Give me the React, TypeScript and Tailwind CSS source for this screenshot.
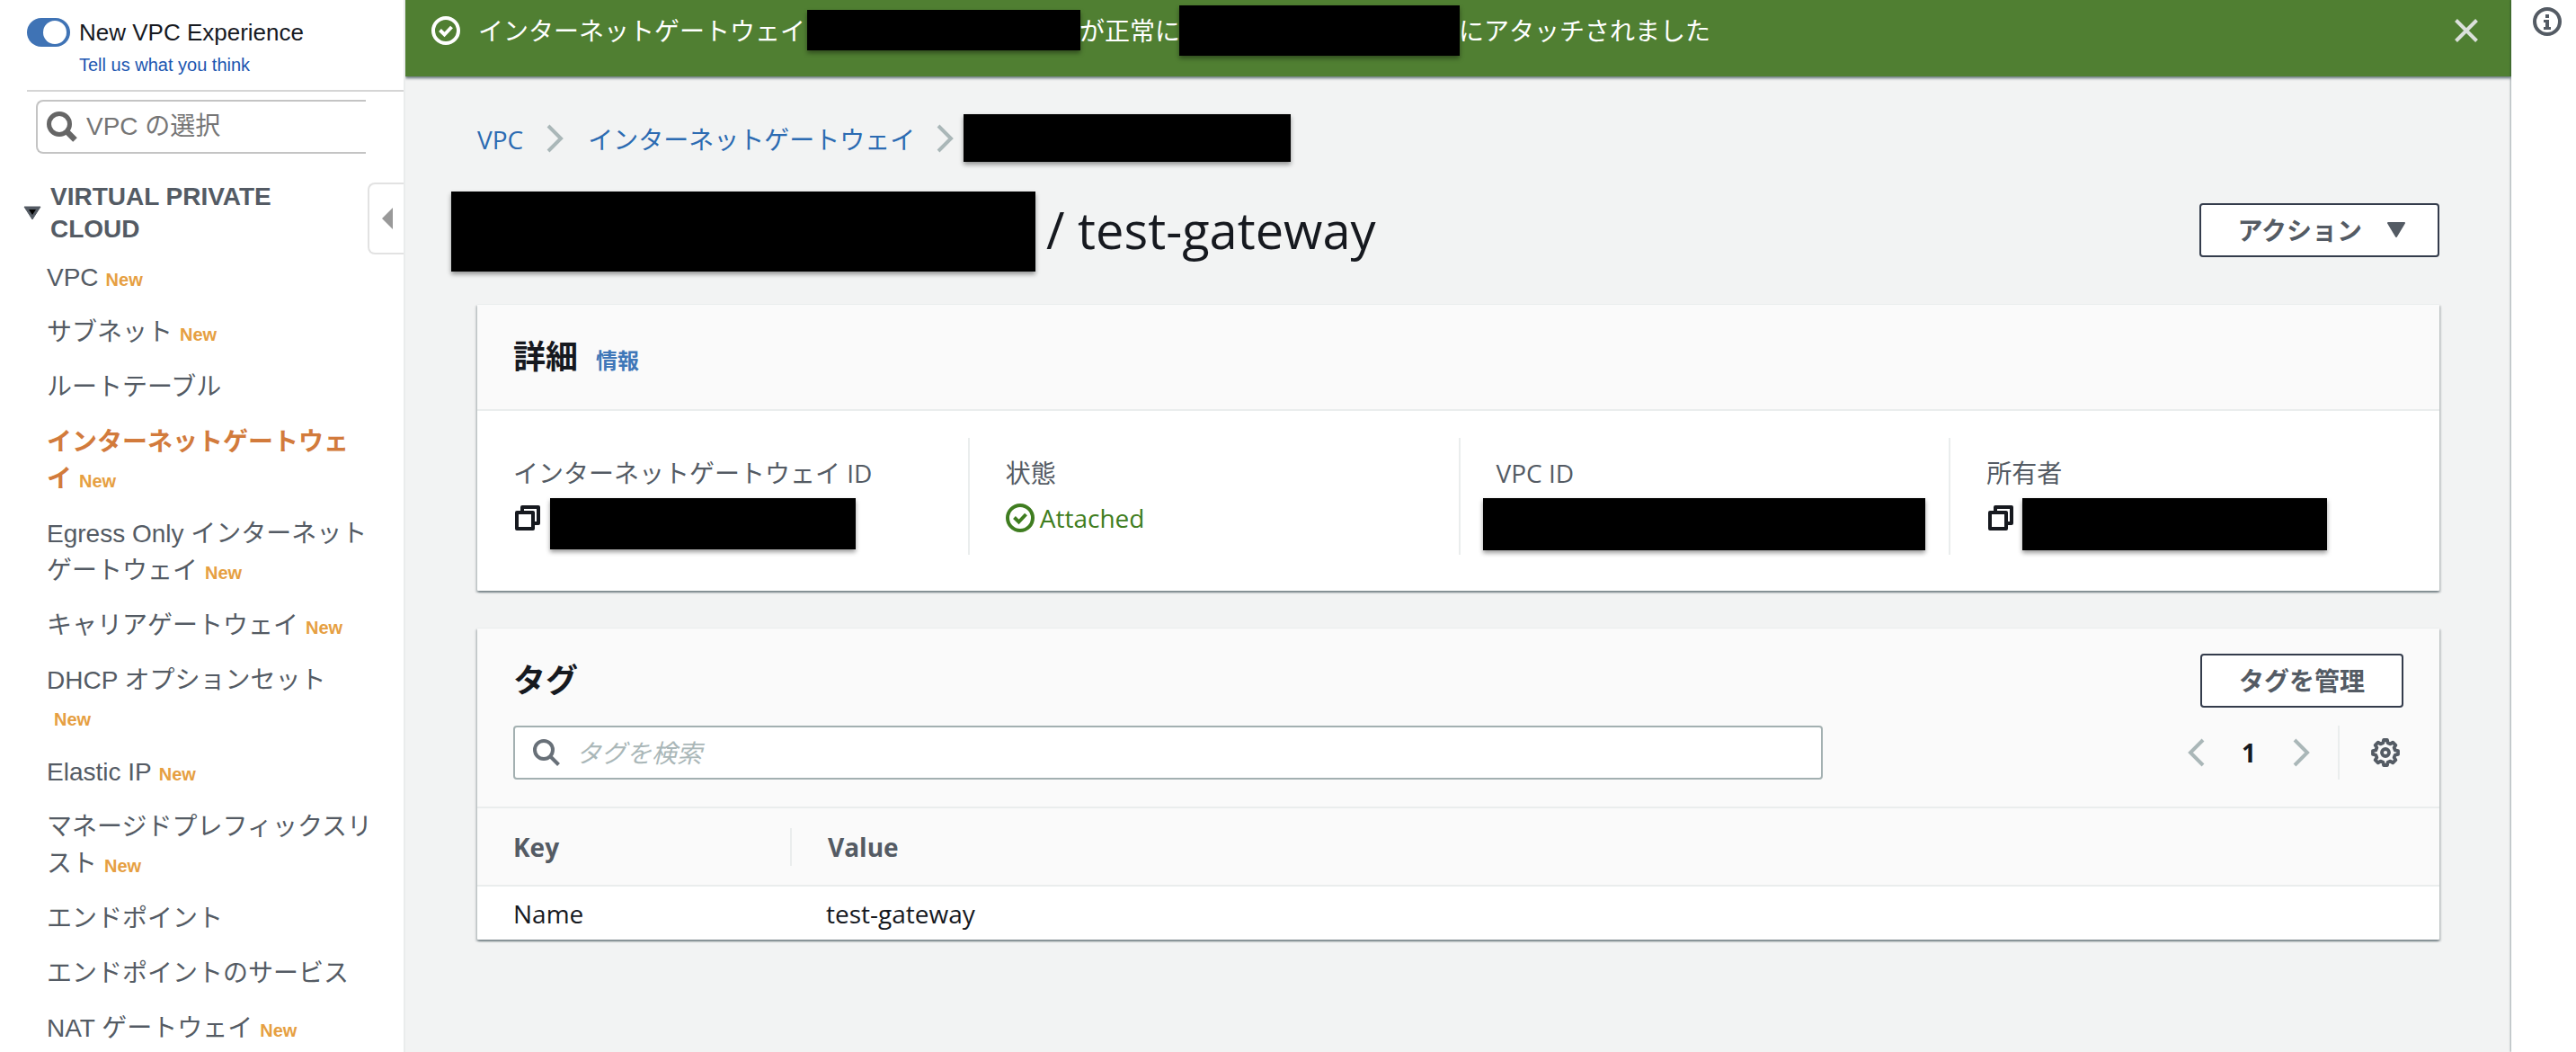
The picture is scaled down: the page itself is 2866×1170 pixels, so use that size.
import type { ReactNode } from "react";

type IconProps = { className?: string };

const CheckCircle = ({ className }: IconProps) => (
  <svg viewBox="0 0 32 32" fill="none" stroke="currentColor" className={className} aria-hidden="true">
    <circle cx="16" cy="16" r="14" strokeWidth="4" />
    <path d="M9.500 15.500l5 5 8-8.500" strokeWidth="4" />
  </svg>
);

const Chevron = ({ className }: IconProps) => (
  <svg viewBox="0 0 20 32" fill="none" stroke="currentColor" strokeWidth="4" className={className} aria-hidden="true">
    <path d="M2 2l14 14L2 30" />
  </svg>
);

const Copy = () => (
  <svg viewBox="0 0 28 28" fill="none" stroke="#16191f" strokeWidth="4" strokeLinejoin="round" className="size-7 shrink-0" aria-hidden="true">
    <path d="M8 6V2h18v18h-5" />
    <path d="M2 8h18v18H2z" />
  </svg>
);

const Gear = () => (
  <svg viewBox="0 0 32 32" fill="none" stroke="currentColor" strokeWidth="3.8" strokeLinejoin="round" className="size-8" aria-hidden="true">
    <path d="M13.400 5.200L14 2h4l.6 3.200 2.900 1.200 2.700-1.800 3.200 3.200-1.800 2.700 1.200 2.900 3.200.6v4l-3.200.6-1.200 2.900 1.800 2.700-3.200 3.200-2.700-1.800-2.900 1.200L18 30h-4l-.6-3.200-2.900-1.200-2.700 1.800-3.200-3.200 1.800-2.700-1.200-2.900L2 18v-4l3.200-.6 1.200-2.900-1.800-2.700 3.200-3.200 2.700 1.800z" />
    <circle cx="16" cy="16" r="4" />
  </svg>
);

const Redacted = ({ className }: IconProps) => (
  <span className={`block shrink-0 bg-black shadow-[0_3px_5px_rgba(0,0,0,0.4)] ${className}`} />
);

type NavItem = { lines: string[]; isNew?: boolean; active?: boolean };

const navItems: NavItem[] = [
  { lines: ["VPC"], isNew: true },
  { lines: ["サブネット"], isNew: true },
  { lines: ["ルートテーブル"] },
  { lines: ["インターネットゲートウェ", "イ"], isNew: true, active: true },
  { lines: ["Egress Only インターネット", "ゲートウェイ"], isNew: true },
  { lines: ["キャリアゲートウェイ"], isNew: true },
  { lines: ["DHCP オプションセット", ""], isNew: true },
  { lines: ["Elastic IP"], isNew: true },
  { lines: ["マネージドプレフィックスリ", "スト"], isNew: true },
  { lines: ["エンドポイント"] },
  { lines: ["エンドポイントのサービス"] },
  { lines: ["NAT ゲートウェイ"], isNew: true },
];

function Sidebar() {
  return (
    <aside className="relative w-[451px] shrink-0 overflow-hidden border-r-2 border-[#eaecec] bg-white font-['Liberation_Sans','Noto_Sans_CJK_JP',sans-serif] text-[28px] text-[#545b64]">
      <div className="ml-[30px] flex h-[102px] gap-[10px] border-b-2 border-[#d5d5d5] pt-5">
        <button type="button" role="switch" aria-checked="true" aria-labelledby="new-vpc" className="flex h-8 w-12 shrink-0 justify-end rounded-full bg-[#3f73b5] p-[3px] pr-1">
          <span className="size-[26px] rounded-full bg-white" />
        </button>
        <div>
          <div id="new-vpc" className="text-[26px] leading-8 text-[#16191f]">New VPC Experience</div>
          <a href="#feedback" className="block text-[20px] leading-10 text-[#1a55b0]">Tell us what you think</a>
        </div>
      </div>
      <div className="mt-[9px] ml-10 flex h-[60px] w-[367px] items-center gap-[10px] rounded-l-lg border-2 border-r-0 border-[#c4c4c4] pl-[10px]">
        <svg viewBox="0 0 34 34" fill="none" stroke="#666" className="size-[34px] shrink-0" aria-hidden="true">
          <circle cx="14" cy="14" r="11.500" strokeWidth="5" />
          <path d="M22.500 22.500l9 9" strokeWidth="6.500" />
        </svg>
        <input type="text" aria-label="VPC の選択" placeholder="VPC の選択" className="min-w-0 flex-1 outline-none placeholder:text-[#757575]" />
      </div>
      <h2 className="mt-[30px] ml-[26px] flex items-center gap-[10px] leading-9 font-bold">
        <svg viewBox="0 0 20 16" className="w-5 shrink-0" aria-hidden="true">
          <path d="M1 1h18l-9 14z" fill="#545b64" stroke="#545b64" strokeLinejoin="round" />
          <path d="M6 4h8l-4 6z" fill="#000" />
        </svg>
        <span>VIRTUAL PRIVATE<br />CLOUD</span>
      </h2>
      <ul className="mt-[15px] ml-[52px] flex flex-col gap-5 leading-[41px] whitespace-nowrap">
        {navItems.map((item) => (
          <li key={item.lines[0]}>
            <a href="#nav" className={item.active ? "font-bold text-[#d27b3c]" : ""}>
              {item.lines[0]}
              {item.lines.length > 1 && <br />}
              {item.lines[1]}
            </a>
            {item.isNew && <span className="ml-2 text-[20px] leading-5 font-bold text-[#e69f42]">New</span>}
          </li>
        ))}
      </ul>
      <button type="button" aria-label="Collapse" className="absolute top-[203px] -right-[2px] flex h-20 w-[42px] items-center justify-center rounded-l-lg border-2 border-r-0 border-[#e2e2e2] bg-white">
        <svg viewBox="0 0 12 24" className="w-3" aria-hidden="true"><path d="M12 0v24L0 12z" fill="#999" /></svg>
      </button>
    </aside>
  );
}

const cardClass =
  "rounded-[1px] border-t border-[#eaeded] bg-white shadow-[0_2px_2px_rgba(0,28,36,0.3),2px_2px_2px_rgba(0,28,36,0.15),-2px_2px_2px_rgba(0,28,36,0.15)]";

const buttonClass =
  "flex h-[60px] items-center rounded-[4px] border-2 border-[#343c4c] bg-white text-[28px] font-bold text-[#545b64]";

function Detail({ label, first, children }: { label: string; first?: boolean; children: ReactNode }) {
  return (
    <div className={`px-10 pt-5 pb-[5px] ${first ? "" : "border-l-2 border-[#eaeded]"}`}>
      <dt className="leading-[38px] text-[#545b64]">{label}</dt>
      <dd className="mt-[9px] flex h-[58px] items-start">{children}</dd>
    </div>
  );
}

export default function App() {
  return (
    <div className="flex h-screen overflow-hidden bg-[#f2f3f3] font-['Open_Sans','Noto_Sans_CJK_JP',sans-serif] text-[28px] text-[#16191f]">
      <Sidebar />
      <main className="min-w-0 flex-1">
        <div role="status" className="flex h-[85px] items-start bg-[#507f32] pr-[37px] pl-[29px] leading-9 text-white shadow-[0_2px_3px_rgba(0,28,36,0.6)]">
          <CheckCircle className="mt-[18px] size-8 shrink-0" />
          <span className="mt-4 ml-5">インターネットゲートウェイ</span>
          <Redacted className="mt-[11px] ml-[2px] h-[45px] w-[304px]" />
          <span className="mt-4 -ml-px">が正常に</span>
          <Redacted className="mt-[6px] -ml-px h-14 w-[312px]" />
          <span className="mt-4 -ml-px">にアタッチされました</span>
          <button type="button" aria-label="Close" className="mt-[21px] ml-auto">
            <svg viewBox="0 0 26 26" fill="none" stroke="#dbe0db" strokeWidth="4" className="size-[26px]" aria-hidden="true">
              <path d="M1.500 1.500l23 23M24.500 1.500l-23 23" />
            </svg>
          </button>
        </div>

        <div className="px-20 pt-[42px]">
          <nav aria-label="Breadcrumb" className="flex h-[53px] items-center text-[#2c6bb2]">
            <a href="#vpc" className="pt-[2px]">VPC</a>
            <Chevron className="mx-[26px] h-8 w-5 text-[#aab7b8]" />
            <a href="#igw" className="pt-[2px]">インターネットゲートウェイ</a>
            <Chevron className="mr-[10px] ml-6 h-8 w-5 text-[#aab7b8]" />
            <Redacted className="h-[53px] w-[364px]" />
          </nav>

          <div className="mt-[33px] flex h-[89px] items-center">
            <h1 className="-ml-[29px] flex items-center text-[56px] leading-[85px] font-medium">
              <Redacted className="h-[89px] w-[650px]" />
              <span className="ml-3 pb-1">/ test-gateway</span>
            </h1>
            <button type="button" className={`${buttonClass} mb-1 ml-auto gap-7 pr-9 pl-10`}>
              アクション
              <svg viewBox="0 0 20 17" className="w-5" aria-hidden="true">
                <path d="M1 1h18l-9 15z" fill="#545b64" stroke="#545b64" strokeWidth="2" strokeLinejoin="round" />
              </svg>
            </button>
          </div>

          <section className={`${cardClass} mt-9`}>
            <header className="flex h-[118px] items-center border-b-2 border-[#eaeded] bg-[#fafafa] px-10">
              <h2 className="text-[36px] leading-[54px] font-bold">詳細</h2>
              <a href="#info" className="ml-5 pt-2 text-[24px] font-bold text-[#3f77b8]">情報</a>
            </header>
            <dl className="grid grid-cols-4 pt-[30px] pb-10">
              <Detail label="インターネットゲートウェイ ID" first>
                <span className="mt-2 ml-[2px]"><Copy /></span>
                <Redacted className="ml-[11px] h-[57px] w-[340px]" />
              </Detail>
              <Detail label="状態">
                <span className="mt-[6px] flex h-8 items-center gap-[6px] text-[#3f7d20]">
                  <CheckCircle className="size-8" />
                  Attached
                </span>
              </Detail>
              <Detail label="VPC ID">
                <Redacted className="-ml-[15px] h-[58px] w-[492px]" />
              </Detail>
              <Detail label="所有者">
                <span className="mt-2 ml-[2px]"><Copy /></span>
                <Redacted className="ml-[10px] h-[58px] w-[339px]" />
              </Detail>
            </dl>
          </section>

          <section className={`${cardClass} mt-[41px]`}>
            <header className="border-b-2 border-[#eaeded] bg-[#fafafa] px-10 pt-7 pb-[30px]">
              <div className="flex items-center justify-between">
                <h2 className="text-[36px] font-bold">タグ</h2>
                <button type="button" className={`${buttonClass} px-[41px]`}>タグを管理</button>
              </div>
              <div className="mt-5 flex h-[60px] items-center justify-between">
                <label className="flex h-full w-[1457px] items-center gap-[18px] rounded-[4px] border-2 border-[#a3b0b1] bg-white px-5">
                  <svg viewBox="0 0 30 30" fill="none" stroke="#687078" strokeWidth="4" className="size-[30px] shrink-0" aria-hidden="true">
                    <circle cx="12" cy="12" r="10" />
                    <path d="M19 19l9.500 9.500" />
                  </svg>
                  <input type="text" aria-label="タグを検索" placeholder="タグを検索" className="min-w-0 flex-1 outline-none placeholder:text-[#aab7b8] placeholder:italic" />
                </label>
                <div className="flex h-full items-center text-[#545b64]">
                  <button type="button" aria-label="Previous page" className="text-[#aab7b8]"><Chevron className="h-8 w-5 rotate-180" /></button>
                  <button type="button" aria-current="page" className="w-[98px] text-center font-bold text-[#16191f]">1</button>
                  <button type="button" aria-label="Next page" className="text-[#aab7b8]"><Chevron className="h-8 w-5" /></button>
                  <span className="mr-[35px] ml-[30px] h-full border-l-2 border-[#eaeded]" />
                  <button type="button" aria-label="Settings" className="mr-1"><Gear /></button>
                </div>
              </div>
            </header>
            <table className="w-full text-left">
              <thead className="bg-[#fafafa] text-[#545b64]">
                <tr className="h-[86px] border-b-2 border-[#eaeded]">
                  <th className="w-[350px] pl-10 font-bold">
                    <div className="border-r-2 border-[#eaeded] leading-[42px]">Key</div>
                  </th>
                  <th className="pl-10 font-bold">Value</th>
                </tr>
              </thead>
              <tbody>
                <tr className="h-[60px] leading-9">
                  <td className="pl-10">Name</td>
                  <td className="pl-[38px]">test-gateway</td>
                </tr>
              </tbody>
            </table>
          </section>
        </div>
      </main>
      <aside className="flex w-[72px] shrink-0 items-start justify-center bg-white pt-2 shadow-[-1px_0_2px_rgba(0,28,36,0.35)]">
        <button type="button" aria-label="Info" className="ml-[8px]">
          <svg viewBox="0 0 32 32" fill="none" className="size-8" aria-hidden="true">
            <circle cx="16" cy="16" r="14" stroke="#545b64" strokeWidth="4" />
            <path d="M14 8h4v4h-4zM12 14h6v8h2v3h-8v-3h2v-5h-2z" fill="#545b64" />
          </svg>
        </button>
      </aside>
    </div>
  );
}
